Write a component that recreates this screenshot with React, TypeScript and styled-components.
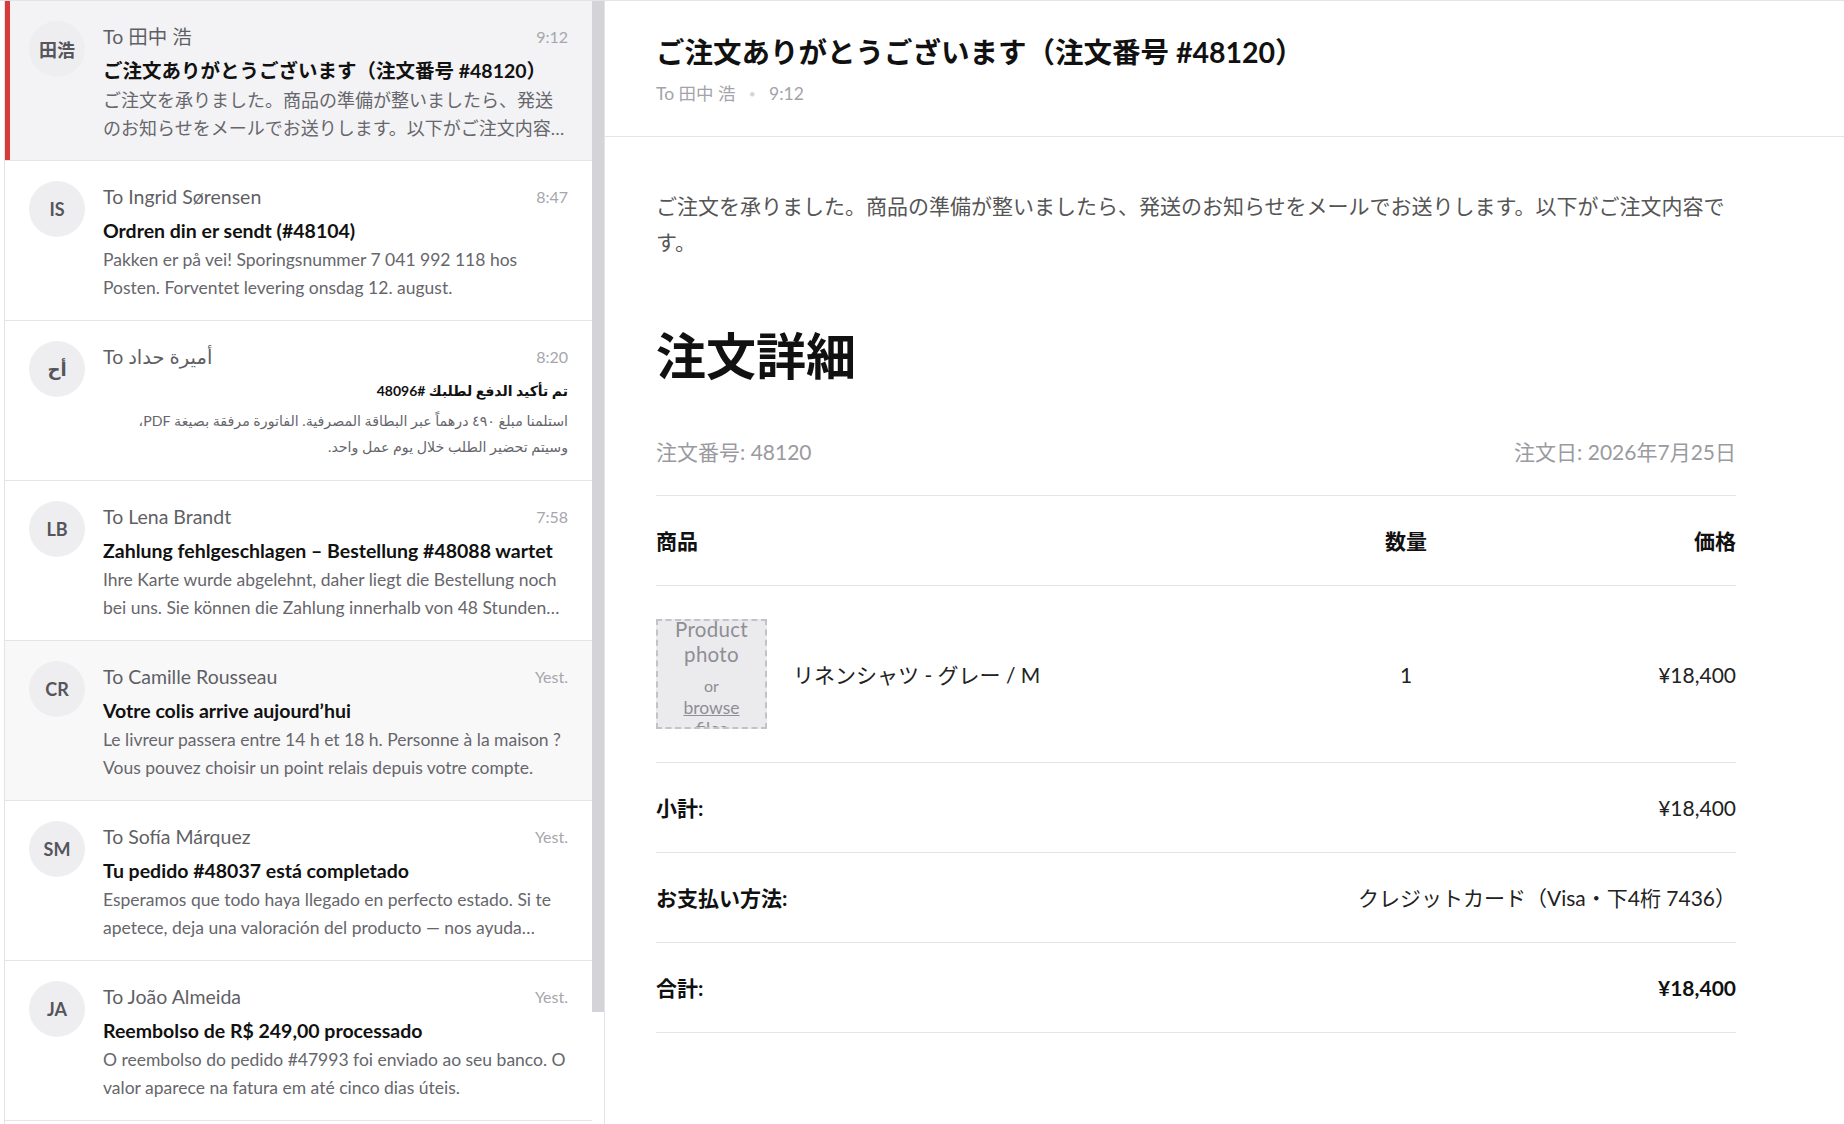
import styled, { createGlobalStyle } from 'styled-components';

const GlobalStyle = createGlobalStyle`
  html, body {
    margin: 0;
    height: 100%;
  }
  body {
    font-family: Lato, "Noto Sans CJK JP", "DejaVu Sans", sans-serif;
    color: #111;
    background: #fff;
  }
  * {
    box-sizing: border-box;
  }
`;

const Layout = styled.div`
  display: flex;
  height: 100vh;
  border-top: 1px solid #e4e4e7;
  overflow: hidden;
`;

const Sidebar = styled.aside`
  display: flex;
  flex-shrink: 0;
  margin-left: 4px;
  border-left: 1px solid #e4e4e7;
  border-right: 1px solid #e4e4e7;
`;

const Inbox = styled.ul`
  list-style: none;
  margin: 0;
  padding: 0;
  width: 587px;
  overflow: hidden;
`;

const ScrollTrack = styled.div`
  width: 12px;
  background: #fff;
`;

const ScrollThumb = styled.div`
  height: 90%;
  background: #d4d4d8;
`;

const Item = styled.li<{ $active?: boolean; $hover?: boolean }>`
  display: flex;
  gap: 18px;
  padding: 20px 24px 18px 24px;
  border-bottom: 1px solid #e4e4e7;
  background: ${({ $active, $hover }) => ($active ? '#f3f3f5' : $hover ? '#f8f8f9' : '#fff')};
  box-shadow: ${({ $active }) => ($active ? 'inset 5px 0 0 #d93a3a' : 'none')};
`;

const Avatar = styled.div`
  width: 56px;
  height: 56px;
  flex-shrink: 0;
  border-radius: 50%;
  background: #eeeef1;
  color: #55555b;
  font-size: 18px;
  font-weight: 700;
  display: flex;
  align-items: center;
  justify-content: center;
`;

const ItemBody = styled.div`
  flex: 1;
  min-width: 0;
  padding-top: 2px;
`;

const ItemTop = styled.div`
  display: flex;
  align-items: center;
  justify-content: space-between;
  gap: 12px;
  line-height: 28px;
`;

const Sender = styled.span`
  font-size: 19.5px;
  color: #5f5f66;
  white-space: nowrap;
`;

const Time = styled.span`
  font-size: 16px;
  color: #a6a6ad;
  flex-shrink: 0;
`;

const ItemTitle = styled.div<{ $rtl?: boolean }>`
  margin-top: 6px;
  font-size: ${({ $rtl }) => ($rtl ? 14 : 19.5)}px;
  line-height: 28px;
  font-weight: 700;
  color: #111;
  white-space: nowrap;
  overflow: hidden;
  text-overflow: ellipsis;
`;

const Preview = styled.div<{ $rtl?: boolean }>`
  margin-top: ${({ $rtl }) => ($rtl ? 3 : 1)}px;
  padding-bottom: ${({ $rtl }) => ($rtl ? 2 : 0)}px;
  font-size: ${({ $rtl }) => ($rtl ? 14.2 : 17.5)}px;
  line-height: ${({ $rtl }) => ($rtl ? 26 : 28)}px;
  color: #66666c;
  display: -webkit-box;
  -webkit-line-clamp: 2;
  -webkit-box-orient: vertical;
  overflow: hidden;

  &:lang(ja) {
    font-size: 18px;
  }
`;

const Detail = styled.main`
  flex: 1;
  min-width: 0;
  overflow-y: auto;
`;

const DetailHeader = styled.header`
  padding: 31px 51px 30px;
  border-bottom: 1px solid #e4e4e7;
`;

const Subject = styled.h1`
  margin: 0;
  font-size: 28.5px;
  line-height: 40px;
  font-weight: 700;
  color: #111;
`;

const Meta = styled.div`
  margin-top: 10px;
  display: flex;
  align-items: center;
  gap: 14px;
  font-size: 17.5px;
  line-height: 24px;
  color: #a3a3aa;
`;

const Dot = styled.span`
  color: #d4d4d8;
  font-size: 9px;
`;

const Body = styled.div`
  padding: 51px 51px 60px;
  max-width: 1182px;
`;

const Intro = styled.p`
  margin: 0;
  font-size: 21px;
  line-height: 36px;
  color: #555;
`;

const Heading = styled.h2`
  margin: 66px 0 0;
  font-size: 50px;
  line-height: 60px;
  font-weight: 700;
  color: #111;
`;

const OrderInfo = styled.div`
  margin-top: 51px;
  padding-bottom: 29px;
  display: flex;
  justify-content: space-between;
  font-size: 21px;
  line-height: 29px;
  color: #9a9aa0;
  border-bottom: 1px solid #e4e4e7;
`;

const Row = styled.div<{ $pad?: number }>`
  display: grid;
  grid-template-columns: 1fr 160px 250px;
  align-items: center;
  padding: ${({ $pad }) => $pad ?? 30}px 0;
  border-bottom: 1px solid #e4e4e7;
  font-size: 21px;
  line-height: 29px;
  color: #222;
`;

const Cell = styled.div<{ $align?: 'left' | 'center' | 'right'; $bold?: boolean }>`
  text-align: ${({ $align }) => $align ?? 'left'};
  font-weight: ${({ $bold }) => ($bold ? 700 : 400)};
  color: ${({ $bold }) => ($bold ? '#111' : '#222')};
`;

const Product = styled.div`
  display: flex;
  align-items: center;
  gap: 26px;
`;

const PhotoDrop = styled.div`
  width: 111px;
  height: 110px;
  flex-shrink: 0;
  border: 2px dashed #c2c2c7;
  background: #ebebed;
  color: #8e8e94;
  display: flex;
  flex-direction: column;
  align-items: center;
  overflow: hidden;
  text-align: center;
  padding: 0 8px;
`;

const DropTitle = styled.div`
  margin-top: -4px;
  font-size: 20.5px;
  line-height: 25px;
  letter-spacing: 0.3px;
`;

const DropOr = styled.div`
  margin-top: 8px;
  font-size: 16px;
  line-height: 22px;
`;

const DropLink = styled.div`
  width: 64px;
  font-size: 17.5px;
  line-height: 21px;
  text-decoration: underline;
`;

const SummaryRow = styled.div`
  display: flex;
  justify-content: space-between;
  align-items: center;
  padding: 30px 0;
  border-bottom: 1px solid #e4e4e7;
  font-size: 21px;
  line-height: 29px;
`;

const Label = styled.span`
  font-weight: 700;
  color: #111;
`;

const Value = styled.span<{ $bold?: boolean }>`
  font-weight: ${({ $bold }) => ($bold ? 700 : 400)};
  color: ${({ $bold }) => ($bold ? '#111' : '#222')};
`;

type Mail = {
  initials: string;
  to: string;
  time: string;
  subject: string;
  preview: string;
  lang: string;
  rtl?: boolean;
  active?: boolean;
  hover?: boolean;
};

const mails: Mail[] = [
  {
    initials: '田浩',
    to: 'To 田中 浩',
    time: '9:12',
    subject: 'ご注文ありがとうございます（注文番号 #48120）',
    preview:
      'ご注文を承りました。商品の準備が整いましたら、発送のお知らせをメールでお送りします。以下がご注文内容です。',
    lang: 'ja',
    active: true,
  },
  {
    initials: 'IS',
    to: 'To Ingrid Sørensen',
    time: '8:47',
    subject: 'Ordren din er sendt (#48104)',
    preview: 'Pakken er på vei! Sporingsnummer 7 041 992 118 hos Posten. Forventet levering onsdag 12. august.',
    lang: 'nb',
  },
  {
    initials: 'أح',
    to: 'To أميرة حداد',
    time: '8:20',
    subject: 'تم تأكيد الدفع لطلبك #48096',
    preview: 'استلمنا مبلغ ٤٩٠ درهماً عبر البطاقة المصرفية. الفاتورة مرفقة بصيغة PDF، وسيتم تحضير الطلب خلال يوم عمل واحد.',
    lang: 'ar',
    rtl: true,
  },
  {
    initials: 'LB',
    to: 'To Lena Brandt',
    time: '7:58',
    subject: 'Zahlung fehlgeschlagen – Bestellung #48088 wartet',
    preview:
      'Ihre Karte wurde abgelehnt, daher liegt die Bestellung noch bei uns. Sie können die Zahlung innerhalb von 48 Stunden erneut vornehmen.',
    lang: 'de',
  },
  {
    initials: 'CR',
    to: 'To Camille Rousseau',
    time: 'Yest.',
    subject: 'Votre colis arrive aujourd’hui',
    preview:
      'Le livreur passera entre 14 h et 18 h. Personne à la maison\u00a0? Vous pouvez choisir un point relais depuis votre compte.',
    lang: 'fr',
    hover: true,
  },
  {
    initials: 'SM',
    to: 'To Sofía Márquez',
    time: 'Yest.',
    subject: 'Tu pedido #48037 está completado',
    preview:
      'Esperamos que todo haya llegado en perfecto estado. Si te apetece, deja una valoración del producto — nos ayuda muchísimo.',
    lang: 'es',
  },
  {
    initials: 'JA',
    to: 'To João Almeida',
    time: 'Yest.',
    subject: 'Reembolso de R$ 249,00 processado',
    preview: 'O reembolso do pedido #47993 foi enviado ao seu banco. O valor aparece na fatura em até cinco dias úteis.',
    lang: 'pt',
  },
  {
    initials: 'EJ',
    to: 'To Emma Johansson',
    time: 'Mon',
    subject: 'Tack för din beställning (#47951)',
    preview: 'Vi har tagit emot din beställning och hör av oss när den skickas.',
    lang: 'sv',
  },
];

const App = () => {
  return (
    <>
      <GlobalStyle />
      <Layout>
        {/* INBOX */}
        <Sidebar>
          <Inbox>
            {mails.map((m) => (
              <Item key={m.subject} $active={m.active} $hover={m.hover}>
                <Avatar>{m.initials}</Avatar>
                <ItemBody>
                  <ItemTop>
                    <Sender>{m.to}</Sender>
                    <Time>{m.time}</Time>
                  </ItemTop>
                  <ItemTitle $rtl={m.rtl} dir={m.rtl ? 'rtl' : undefined} lang={m.lang}>
                    {m.subject}
                  </ItemTitle>
                  <Preview $rtl={m.rtl} dir={m.rtl ? 'rtl' : undefined} lang={m.lang}>
                    {m.preview}
                  </Preview>
                </ItemBody>
              </Item>
            ))}
          </Inbox>
          <ScrollTrack>
            <ScrollThumb />
          </ScrollTrack>
        </Sidebar>

        {/* MESSAGE */}
        <Detail lang="ja">
          <DetailHeader>
            <Subject>ご注文ありがとうございます（注文番号 #48120）</Subject>
            <Meta>
              <span>To 田中 浩</span>
              <Dot>●</Dot>
              <span>9:12</span>
            </Meta>
          </DetailHeader>

          <Body>
            <Intro>
              ご注文を承りました。商品の準備が整いましたら、発送のお知らせをメールでお送りします。以下がご注文内容です。
            </Intro>
            <Heading>注文詳細</Heading>
            <OrderInfo>
              <span>注文番号: 48120</span>
              <span>注文日: 2026年7月25日</span>
            </OrderInfo>

            <Row>
              <Cell $bold>商品</Cell>
              <Cell $bold $align="center">数量</Cell>
              <Cell $bold $align="right">価格</Cell>
            </Row>
            <Row $pad={33}>
              <Product>
                <PhotoDrop lang="en">
                  <DropTitle>Product photo</DropTitle>
                  <DropOr>or</DropOr>
                  <DropLink>browse files</DropLink>
                </PhotoDrop>
                <span>リネンシャツ - グレー / M</span>
              </Product>
              <Cell $align="center">1</Cell>
              <Cell $align="right">¥18,400</Cell>
            </Row>

            <SummaryRow>
              <Label>小計:</Label>
              <Value>¥18,400</Value>
            </SummaryRow>
            <SummaryRow>
              <Label>お支払い方法:</Label>
              <Value>クレジットカード（Visa・下4桁 7436）</Value>
            </SummaryRow>
            <SummaryRow>
              <Label>合計:</Label>
              <Value $bold>¥18,400</Value>
            </SummaryRow>
          </Body>
        </Detail>
      </Layout>
    </>
  );
};

export default App;
